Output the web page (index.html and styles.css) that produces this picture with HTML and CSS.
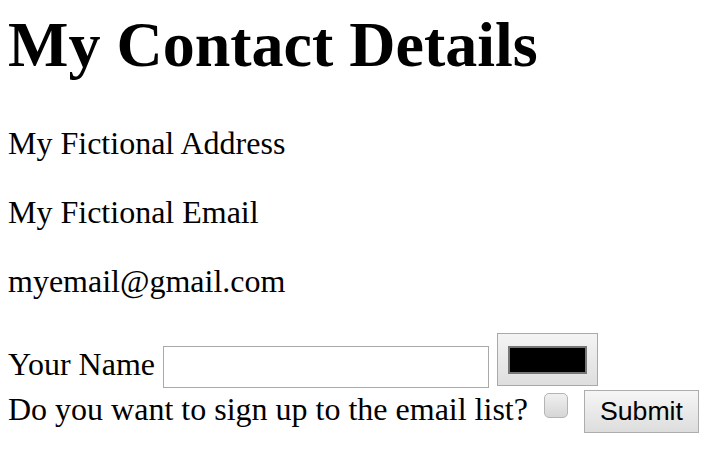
FILE: index.html
```html
<!DOCTYPE html>
<html lang="en">
<head>
<meta charset="utf-8">
<title>My Contact Details</title>
<link rel="stylesheet" href="styles.css">
</head>
<body>
<h1 class="title">My Contact Details</h1>
<p class="info">My Fictional Address</p>
<p class="info">My Fictional Email</p>
<p class="info">myemail@gmail.com</p>
<form class="signup">
<label class="field">Your Name <input type="text" class="name-input"></label> <input type="color" class="color-input" value="#000000"><br>
<label class="field">Do you want to sign up to the email list? <input type="checkbox" class="check"></label> <input type="submit" class="submit" value="Submit">
</form>
</body>
</html>
```

FILE: styles.css
```css
html, body {
  background: #ffffff;
}
body {
  margin: 8px;
  font-family: "Liberation Serif", "Times New Roman", serif;
  font-size: 32px;
  color: #000000;
}
.title {
  font-size: 64px;
  font-weight: bold;
  margin: 0 0 43px 0;
}
.info {
  margin: 32px 0;
}
.signup {
  margin: 0;
}
.name-input {
  box-sizing: border-box;
  width: 326px;
  height: 42px;
  margin: 0 0 2px 0;
  padding: 2px 4px;
  border: 1px solid #a9a9a9;
  border-radius: 0;
  font-family: "Liberation Sans", Arial, sans-serif;
  font-size: 26px;
  vertical-align: baseline;
  background: #ffffff;
  outline: none;
}
.color-input {
  box-sizing: border-box;
  width: 101px;
  height: 53px;
  margin: 1px 0 0 0;
  padding: 12px 10px 11px 10px;
  border: 1px solid #a9a9a9;
  border-radius: 0;
  background: linear-gradient(#f4f4f4, #dedede);
  vertical-align: 1px;
  cursor: pointer;
}
.color-input::-webkit-color-swatch-wrapper {
  padding: 0;
}
.color-input::-webkit-color-swatch {
  border: 2px solid #777777;
  border-radius: 0;
}
.check {
  -webkit-appearance: none;
  appearance: none;
  box-sizing: border-box;
  width: 24px;
  height: 25px;
  margin: 0 8px 0 8px;
  border: 1px solid #b4b4b4;
  border-radius: 5px;
  background: linear-gradient(#f0f0f0, #d6d6d6);
  vertical-align: 2px;
}
.submit {
  box-sizing: border-box;
  width: 115px;
  height: 43px;
  margin: 0;
  padding: 0;
  border: 1px solid #adadad;
  border-radius: 0;
  background: linear-gradient(#f6f6f6, #dddddd);
  font-family: "Liberation Sans", Arial, sans-serif;
  font-size: 26.67px;
  color: #000000;
}
```
